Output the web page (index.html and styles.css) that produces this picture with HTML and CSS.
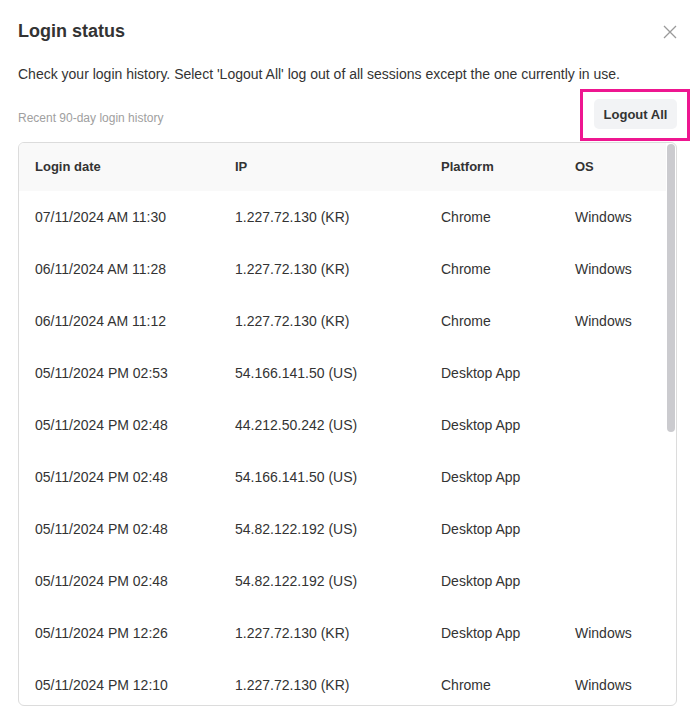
FILE: index.html
```html
<!DOCTYPE html>
<html lang="en">
<head>
<meta charset="utf-8">
<title>Login status</title>
<link rel="stylesheet" href="styles.css">
</head>
<body>
<div class="dialog">
  <div class="dialog-head">
    <h1 class="title">Login status</h1>
    <button class="close" aria-label="Close">
      <svg width="14" height="14" viewBox="0 0 14 14"><path d="M1 1L13 13M13 1L1 13" stroke="#9a9a9a" stroke-width="1.3" fill="none"/></svg>
    </button>
  </div>
  <p class="desc">Check your login history. Select 'Logout All' log out of all sessions except the one currently in use.</p>
  <div class="toolbar">
    <span class="caption">Recent 90-day login history</span>
    <div class="btn-wrap">
      <button class="logout">Logout All</button>
      <span class="highlight"></span>
    </div>
  </div>
  <div class="table-wrap">
    <div class="rows">
      <div class="row head">
        <div>Login date</div><div>IP</div><div>Platform</div><div>OS</div>
      </div>
      <div class="row"><div>07/11/2024 AM 11:30</div><div>1.227.72.130 (KR)</div><div>Chrome</div><div>Windows</div></div>
      <div class="row"><div>06/11/2024 AM 11:28</div><div>1.227.72.130 (KR)</div><div>Chrome</div><div>Windows</div></div>
      <div class="row"><div>06/11/2024 AM 11:12</div><div>1.227.72.130 (KR)</div><div>Chrome</div><div>Windows</div></div>
      <div class="row"><div>05/11/2024 PM 02:53</div><div>54.166.141.50 (US)</div><div>Desktop App</div><div></div></div>
      <div class="row"><div>05/11/2024 PM 02:48</div><div>44.212.50.242 (US)</div><div>Desktop App</div><div></div></div>
      <div class="row"><div>05/11/2024 PM 02:48</div><div>54.166.141.50 (US)</div><div>Desktop App</div><div></div></div>
      <div class="row"><div>05/11/2024 PM 02:48</div><div>54.82.122.192 (US)</div><div>Desktop App</div><div></div></div>
      <div class="row"><div>05/11/2024 PM 02:48</div><div>54.82.122.192 (US)</div><div>Desktop App</div><div></div></div>
      <div class="row"><div>05/11/2024 PM 12:26</div><div>1.227.72.130 (KR)</div><div>Desktop App</div><div>Windows</div></div>
      <div class="row"><div>05/11/2024 PM 12:10</div><div>1.227.72.130 (KR)</div><div>Chrome</div><div>Windows</div></div>
    </div>
    <span class="scroll-thumb"></span>
  </div>
</div>
</body>
</html>
```
FILE: styles.css
```css
* { box-sizing: border-box; }
html, body { margin: 0; padding: 0; background: #fff; }
body {
  font-family: Arial, "Liberation Sans", sans-serif;
  color: #333;
  width: 695px;
  height: 719px;
  overflow: hidden;
}
.dialog {
  padding: 19px 18px 0 18px;
}
.dialog-head {
  display: flex;
  justify-content: space-between;
  align-items: center;
  height: 24px;
}
.title {
  margin: 0;
  font-size: 18px;
  line-height: 24px;
  font-weight: bold;
  color: #333;
}
.close {
  border: 0;
  background: none;
  padding: 0;
  width: 14px;
  height: 14px;
  display: flex;
  margin-top: 1px;
  cursor: pointer;
}
.desc {
  margin: 21px 0 0 0;
  font-size: 14px;
  line-height: 20px;
  color: #333;
}
.toolbar {
  margin-top: 15px;
  display: flex;
  justify-content: space-between;
  align-items: flex-end;
}
.caption {
  font-size: 12px;
  line-height: 16px;
  color: #a0a0a0;
  padding-bottom: 3px;
}
.btn-wrap {
  position: relative;
  display: flex;
}
.logout {
  border: 0;
  background: #f2f3f5;
  border-radius: 5px;
  height: 30px;
  width: 83px;
  padding: 0;
  font-family: Arial, "Liberation Sans", sans-serif;
  font-size: 13px;
  font-weight: bold;
  color: #333;
  cursor: pointer;
}
.highlight {
  position: absolute;
  top: -10px;
  bottom: -12px;
  left: -14px;
  right: -13px;
  border: 3px solid #ee1690;
  pointer-events: none;
}
.table-wrap {
  position: relative;
  margin-top: 13px;
  height: 564px;
  border: 1px solid #dcdcdc;
  border-radius: 6px;
  overflow: hidden;
}
.rows {
  margin-right: 10px;
}
.scroll-thumb {
  position: absolute;
  top: 1px;
  right: 1px;
  width: 8px;
  height: 288px;
  background: #cbcbcf;
  border-radius: 4px;
}
.row {
  display: grid;
  grid-template-columns: 200px 206px 134px 1fr;
  height: 52px;
  align-items: center;
  font-size: 14px;
  color: #333;
}
.row > div { padding-left: 16px; white-space: nowrap; }
.row.head {
  height: 48px;
  padding-bottom: 2px;
  background: #f9f9f9;
  font-size: 13px;
  font-weight: bold;
}
```
